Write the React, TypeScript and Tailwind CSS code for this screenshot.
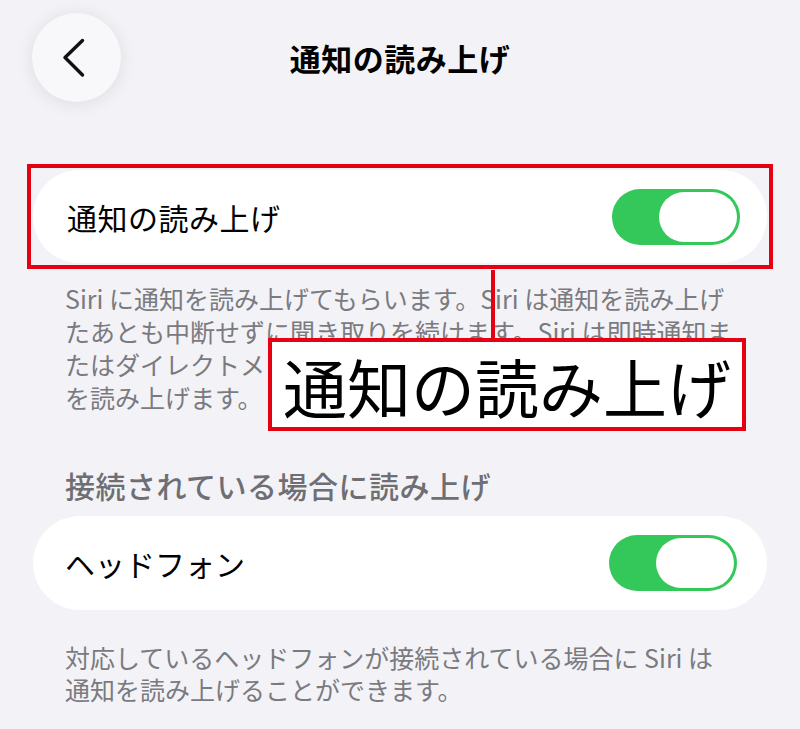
function Toggle() {
  return (
    <div className="flex h-[56px] w-[128px] shrink-0 items-center justify-end rounded-full bg-[#34c759] p-[3px]">
      <div className="h-[50px] w-[78px] rounded-full bg-white" />
    </div>
  );
}

export default function App() {
  return (
    <div className="relative h-[729px] w-[800px] overflow-hidden bg-[#f2f2f7] font-['Noto_Sans_CJK_JP',sans-serif] text-black">
      {/* nav bar */}
      <div className="grid grid-cols-[89px_1fr_89px] items-center px-[32px] pt-[13px]">
        <div className="flex h-[89px] w-[89px] items-center justify-center rounded-full bg-[#f8f8fa] shadow-[0_2px_18px_rgba(0,0,0,0.09)]">
          <svg width="24" height="40" viewBox="0 0 24 40" fill="none" stroke="#111" strokeWidth="3.4" strokeLinecap="round" strokeLinejoin="round" className="-ml-[6px]">
            <path d="M20.5 2.5 L3 19.5 L20.5 37" />
          </svg>
        </div>
        <h1 className="text-center text-[31px] font-bold leading-[40px] tracking-[0.5px]">通知の読み上げ</h1>
        <div />
      </div>

      {/* highlighted row */}
      <div className="mx-[27px] mt-[62px] border-[4px] border-[#e50012] px-[2px] py-[2px]">
        <div className="flex h-[93px] items-center justify-between rounded-[46px] bg-white pl-[34px] pr-[27px]">
          <span className="text-[30px] leading-[40px] tracking-[0.5px]">通知の読み上げ</span>
          <Toggle />
        </div>
      </div>

      <div className="mt-[13px] pl-[65px] text-[25px] leading-[33px] text-[#7a7a7f]">
        <p className="whitespace-nowrap">Siri に通知を読み上げてもらいます。Siri は通知を読み上げ</p>
        <p className="whitespace-nowrap">たあとも中断せずに聞き取りを続けます。Siri は即時通知ま</p>
        <p className="whitespace-nowrap">たはダイレクトメッセージを受け取ったときに通知</p>
        <p className="whitespace-nowrap">を読み上げます。</p>
      </div>

      <h2 className="mt-[52px] whitespace-nowrap pl-[65px] text-[30px] font-medium leading-[38px] text-[#6e6e73] tracking-[0.5px]">接続されている場合に読み上げ</h2>

      <div className="mx-[33px] mt-[12px] flex h-[94px] items-center justify-between rounded-[47px] bg-white pl-[32px] pr-[30px]">
        <span className="text-[30px] leading-[40px]">ヘッドフォン</span>
        <Toggle />
      </div>

      <div className="mt-[31px] pl-[65px] text-[25px] leading-[32px] text-[#7a7a7f]">
        <p className="whitespace-nowrap">対応しているヘッドフォンが接続されている場合に Siri は</p>
        <p className="whitespace-nowrap">通知を読み上げることができます。</p>
      </div>

      {/* callout */}
      <div className="absolute left-[491px] top-[270px] h-[70px] w-[4px] bg-[#e50012]" />
      <div className="absolute left-[268px] top-[338px] flex h-[93px] w-[478px] items-center justify-center border-[4px] border-[#e50012] bg-white">
        <span className="whitespace-nowrap text-[64px] leading-[70px]">通知の読み上げ</span>
      </div>
    </div>
  );
}
